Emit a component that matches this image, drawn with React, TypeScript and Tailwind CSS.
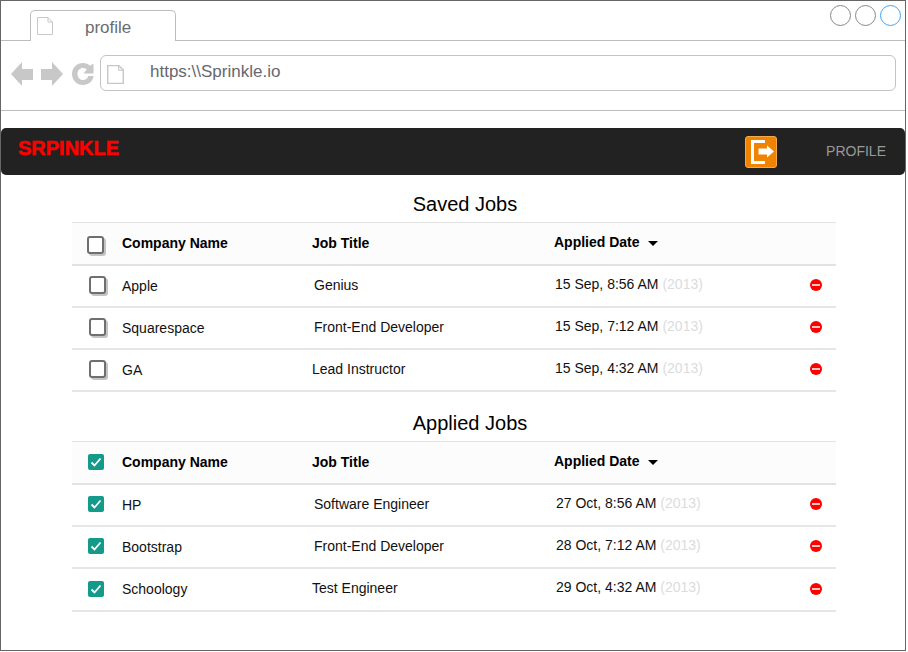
import { ReactNode } from "react";

const font = { fontFamily: '"Liberation Sans", Arial, sans-serif' };

function DocIcon({ className, weight = 1 }: { className: string; weight?: number }) {
  return (
    <svg viewBox="0 0 16 18" className={className} fill="none">
      <path d="M0.5 0.5H11L15.5 5V17.5H0.5Z" fill="#fff" stroke="currentColor" strokeWidth={weight} />
      <path d="M11 0.5V5H15.5" stroke="currentColor" />
    </svg>
  );
}

function NavIcons() {
  return (
    <div className="flex items-center mt-[1px] text-[#c8c8c8]">
      <svg viewBox="0 0 22 24" className="w-[22px] h-[24px]" fill="currentColor">
        <path d="M0 12L11 0V7H22V18H11V24Z" />
      </svg>
      <svg viewBox="0 0 22 24" className="ml-[8px] w-[22px] h-[24px]" fill="currentColor">
        <path d="M22 12L11 0V7H0V18H11V24Z" />
      </svg>
      <svg viewBox="0 0 22 22" className="ml-[9px] w-[22px] h-[22px]" fill="currentColor">
        <path d="M11 0C13.8 0 16.2 1 18 2.8L21.5 0.5V10.5H11.5L14.8 6.6C13.8 5.6 12.5 5 11 5C7.7 5 5.5 7.6 5.5 11S7.7 17 11 17C13.6 17 15.6 15.4 16.2 13H21.6C20.8 18.3 16.5 22 11 22C4.9 22 0 17.1 0 11S4.9 0 11 0Z" />
      </svg>
    </div>
  );
}

function PlainBox({ className }: { className: string }) {
  return (
    <span
      className={`block w-[17px] h-[18px] rounded-[3px] border-2 border-[#6f6f6f] bg-white shadow-[2px_2px_0_#c4c4c4] ${className}`}
    />
  );
}

function CheckedBox() {
  return (
    <span className="flex w-[16px] h-[16px] ml-[1px] -mt-[2px] items-center justify-center rounded-[2px] bg-[#149a8a]">
      <svg viewBox="0 0 16 16" className="w-[16px] h-[16px]" fill="none">
        <path d="M3.5 8.5L6.5 11.5L12.5 4.5" stroke="#fff" strokeWidth="1.8" />
      </svg>
    </span>
  );
}

function MinusDot() {
  return (
    <span className="flex w-[12px] h-[12px] items-center justify-center rounded-full bg-[#ff0000]">
      <span className="block w-[8px] h-[2px] bg-[#ffc4c4]" />
    </span>
  );
}

function HeaderRow({ box }: { box: ReactNode }) {
  return (
    <div className="flex h-[44px] items-center bg-[#fcfcfc] border-t border-b-2 border-[#e2e2e2] text-[14px] font-bold text-black">
      <div className="w-[50px] pl-[15px] flex items-center">{box}</div>
      <div className="w-[190px]">Company Name</div>
      <div className="w-[242px]">Job Title</div>
      <div className="flex items-center -mt-[2px]">
        Applied Date
        <span className="ml-[8px] mt-[1px] w-0 h-0 border-x-[5px] border-x-transparent border-t-[5px] border-t-black" />
      </div>
    </div>
  );
}

interface RowProps {
  box: ReactNode;
  company: string;
  title: string;
  date: string;
  titleClass: string;
  heightClass?: string;
}

function Row({ box, company, title, date, titleClass, heightClass = "h-[42px]" }: RowProps) {
  return (
    <div className={`flex items-center border-b-2 border-[#e6e6e6] text-[14px] text-[#111] ${heightClass}`}>
      <div className="w-[50px] flex items-center">{box}</div>
      <div className="w-[190px]">{company}</div>
      <div className={`-mt-[2px] ${titleClass}`}>{title}</div>
      <div className="flex-1 -mt-[4px] pl-[2px]">
        {date} <span className="text-[#dcdcdc]">(2013)</span>
      </div>
      <div className="w-[26px] -mt-[2px]">
        <MinusDot />
      </div>
    </div>
  );
}

const saved = [
  { company: "Apple", title: "Genius", date: "15 Sep, 8:56 AM", titleClass: "w-[241px] pl-[2px]" },
  { company: "Squarespace", title: "Front-End Developer", date: "15 Sep, 7:12 AM", titleClass: "w-[241px] pl-[2px]" },
  { company: "GA", title: "Lead Instructor", date: "15 Sep, 4:32 AM", titleClass: "w-[241px]" },
];

const applied = [
  { company: "HP", title: "Software Engineer", date: "27 Oct, 8:56 AM", titleClass: "w-[242px] pl-[2px]" },
  { company: "Bootstrap", title: "Front-End Developer", date: "28 Oct, 7:12 AM", titleClass: "w-[242px] pl-[2px]" },
  { company: "Schoology", title: "Test Engineer", date: "29 Oct, 4:32 AM", titleClass: "w-[242px]", heightClass: "h-[43px]" },
];

export default function App() {
  return (
    <div className="w-[908px] h-[652px] bg-white" style={font}>
      <div className="w-[906px] h-[651px] border border-[#666] flex flex-col overflow-hidden">
        {/* Browser tab strip */}
        <div className="h-[40px] shrink-0 flex justify-between border-b border-[#bdbdbd]">
          <div className="ml-[29px] mt-[9px] h-[31px] w-[146px] flex rounded-t-[5px] border border-b-0 border-[#bdbdbd] bg-white">
            <DocIcon className="ml-[6px] mt-[6px] w-[16px] h-[18px] text-[#c8c8c8]" />
            <span className="ml-[32px] mt-[7px] text-[17px] leading-[20px] text-[#6b6b70]">profile</span>
          </div>
          <div className="flex gap-[4px] mr-[4px] mt-[4px]">
            <span className="w-[21px] h-[21px] rounded-full border border-[#888]" />
            <span className="w-[21px] h-[21px] rounded-full border border-[#888]" />
            <span className="w-[21px] h-[21px] rounded-full border border-[#3fa4f8]" />
          </div>
        </div>
        {/* Address bar */}
        <div className="h-[70px] shrink-0 flex items-center pl-[10px] pr-[9px] pb-[5px] border-b border-[#bdbdbd]">
          <NavIcons />
          <div className="ml-[6px] h-[36px] flex-1 flex items-center rounded-[6px] border border-[#c4c4c4]">
            <DocIcon weight={1.6} className="ml-[6px] mt-[2px] w-[17px] h-[19px] text-[#c8c8c8]" />
            <span className="ml-[26px] -mt-[3px] text-[17px] text-[#67676c]">https:\\Sprinkle.io</span>
          </div>
        </div>
        {/* App navbar */}
        <div className="mt-[17px] h-[47px] shrink-0 flex items-center rounded-[5px] bg-[#222]">
          <span className="ml-[17px] -mt-[8px] text-[20px] font-bold text-[#ff0000] [-webkit-text-stroke:0.5px_#ff0000]">
            SRPINKLE
          </span>
          <div className="ml-auto flex items-center">
            <div className="w-[32px] h-[32px] rounded-[3px] bg-[#f08300] border border-[#f5a94f]">
              <svg viewBox="0 0 30 30" className="w-[30px] h-[30px]" fill="none">
                <path d="M19 4.5H6.5V25.5H19" stroke="#fff" strokeWidth="3" />
                <path d="M12.5 11.5H21V8.5L28 14.5L21 20.5V17.5H12.5Z" fill="#fff" />
              </svg>
            </div>
            <span className="ml-[49px] mr-[19px] text-[14px] text-[#999]">PROFILE</span>
          </div>
        </div>
        {/* Job tables */}
        <div className="ml-[71px] w-[764px]">
          <h2 className="mt-[17px] h-[30px] pl-[22px] text-center text-[20px] leading-[24px] text-black">Saved Jobs</h2>
          <HeaderRow box={<PlainBox className="mt-[3px]" />} />
          {saved.map((job) => (
            <Row key={job.company} {...job} box={<PlainBox className="ml-[17px] -mt-[3px]" />} />
          ))}
          <h2 className="mt-[19px] h-[30px] pl-[32px] text-center text-[20px] leading-[24px] text-black">Applied Jobs</h2>
          <HeaderRow box={<CheckedBox />} />
          {applied.map((job) => (
            <Row
              key={job.company}
              {...job}
              box={
                <span className="pl-[15px]">
                  <CheckedBox />
                </span>
              }
            />
          ))}
        </div>
      </div>
    </div>
  );
}
